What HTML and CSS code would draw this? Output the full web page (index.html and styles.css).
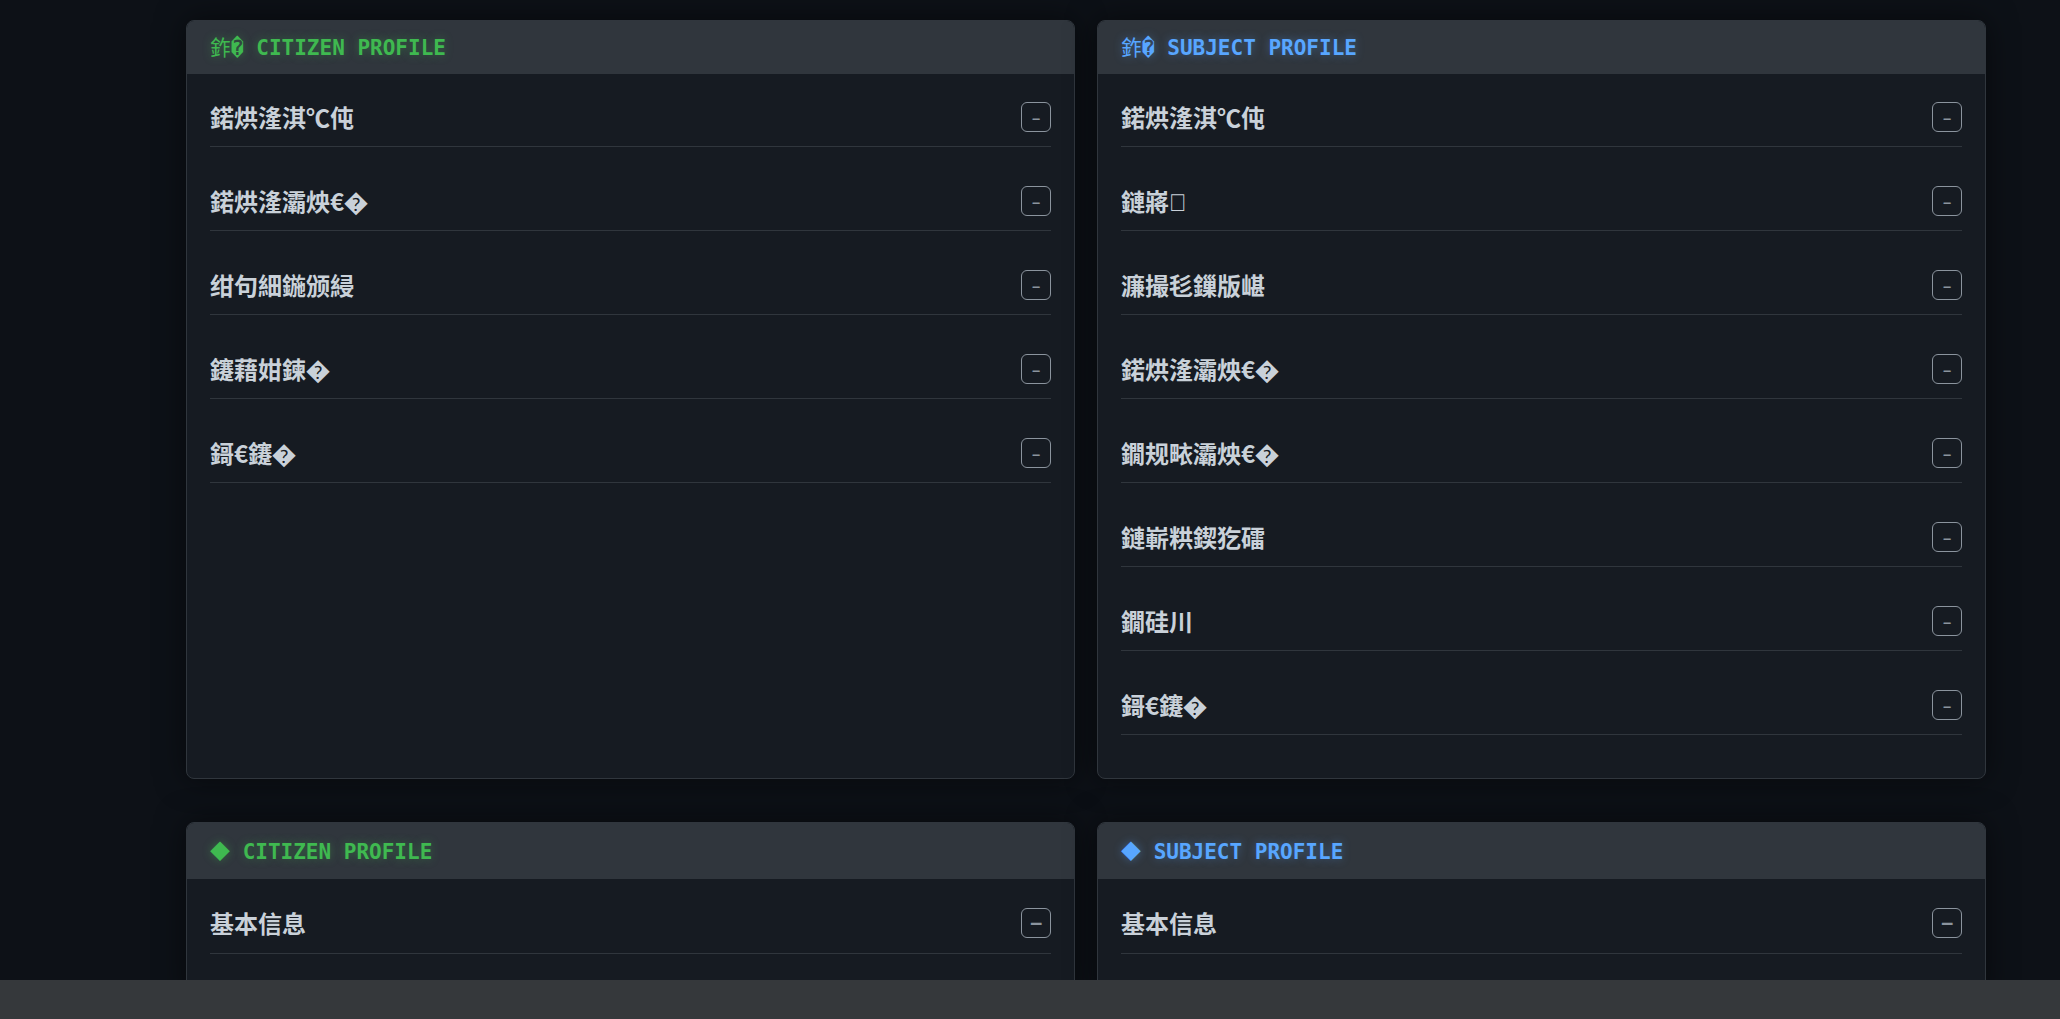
FILE: index.html
```html
<!DOCTYPE html>
<html lang="zh-CN">
<head>
<meta charset="UTF-8" />
<meta name="viewport" content="width=device-width, initial-scale=1.0" />
<title>Profile</title>
<link rel="stylesheet" href="styles.css">
</head>
<body>

<main class="content">
  <div class="profiles">
    <section class="card citizen">
      <h2 class="card-header"><span class="mark">鈼</span>&#xFFFD; CITIZEN PROFILE</h2>
      <div class="card-body">
        <div class="section-title"><h3>鍩烘湰淇℃伅</h3><button class="toggle" aria-label="鍩烘湰淇℃伅">–</button></div>
        <div class="section-title"><h3>鍩烘湰灞炴€&#xFFFD;</h3><button class="toggle" aria-label="鍩烘湰灞炴€">–</button></div>
        <div class="section-title"><h3>绀句細鍦颁綅</h3><button class="toggle" aria-label="绀句細鍦颁綅">–</button></div>
        <div class="section-title"><h3>鑳藉姏鍊&#xFFFD;</h3><button class="toggle" aria-label="鑳藉姏鍊">–</button></div>
        <div class="section-title"><h3>鎶€鑳&#xFFFD;</h3><button class="toggle" aria-label="鎶€鑳">–</button></div>
      </div>
    </section>

    <section class="card subject">
      <h2 class="card-header"><span class="mark">鈼</span>&#xFFFD; SUBJECT PROFILE</h2>
      <div class="card-body">
        <div class="section-title"><h3>鍩烘湰淇℃伅</h3><button class="toggle" aria-label="鍩烘湰淇℃伅">–</button></div>
        <div class="section-title"><h3>鏈嶈<span class="box">&#xE5CA;</span></h3><button class="toggle" aria-label="鏈嶈">–</button></div>
        <div class="section-title"><h3>濂撮毝鏁版嵁</h3><button class="toggle" aria-label="濂撮毝鏁版嵁">–</button></div>
        <div class="section-title"><h3>鍩烘湰灞炴€&#xFFFD;</h3><button class="toggle" aria-label="鍩烘湰灞炴€">–</button></div>
        <div class="section-title"><h3>鐗规畩灞炴€&#xFFFD;</h3><button class="toggle" aria-label="鐗规畩灞炴€">–</button></div>
        <div class="section-title"><h3>鏈嶄粠鍥犵礌</h3><button class="toggle" aria-label="鏈嶄粠鍥犵礌">–</button></div>
        <div class="section-title"><h3>鐗硅川</h3><button class="toggle" aria-label="鐗硅川">–</button></div>
        <div class="section-title"><h3>鎶€鑳&#xFFFD;</h3><button class="toggle" aria-label="鎶€鑳">–</button></div>
      </div>
    </section>
  </div>

  <div class="profiles profiles-main">
    <section class="card citizen">
      <h2 class="card-header"><span class="mark">◆</span> CITIZEN PROFILE</h2>
      <div class="card-body">
        <div class="section-title"><h3>基本信息</h3><button class="toggle" aria-label="基本信息">−</button></div>
      </div>
    </section>

    <section class="card subject">
      <h2 class="card-header"><span class="mark">◆</span> SUBJECT PROFILE</h2>
      <div class="card-body">
        <div class="section-title"><h3>基本信息</h3><button class="toggle" aria-label="基本信息">−</button></div>
      </div>
    </section>
  </div>
</main>

<footer class="bottom-bar"></footer>

</body>
</html>
```

FILE: styles.css
```css
* {
  box-sizing: border-box;
}

body {
  margin: 0;
  height: 100vh;
  display: flex;
  flex-direction: column;
  background: #0d1117;
  color: #c9d1d9;
  font-family: "Noto Sans CJK SC", sans-serif;
}

.content {
  flex: 1;
  min-height: 0;
  overflow: hidden;
  padding: 20px 74px 0 186px;
}

.profiles {
  display: grid;
  grid-template-columns: 1fr 1fr;
  gap: 22px;
  margin-bottom: 43px;
}

.card {
  border: 1px solid #30363d;
  border-radius: 8px;
  background: #161b22;
  box-shadow: 0 0 30px rgba(0, 0, 0, 0.5);
}

.card-header {
  margin: 0;
  padding: 2px 23px 0;
  background: #30363d;
  border-radius: 7px 7px 0 0;
  font-family: "DejaVu Sans Mono", monospace;
  font-size: 21px;
  font-weight: 700;
  line-height: 51px;
  white-space: pre;
}

.mark {
  font-family: "Noto Sans CJK SC", sans-serif;
  font-size: 21px;
  font-weight: 400;
  line-height: 1;
}

.citizen .card-header {
  color: #3fb950;
  text-shadow: 0 0 10px rgba(63, 185, 80, 0.4);
}

.subject .card-header {
  color: #58a6ff;
  text-shadow: 0 0 10px rgba(88, 166, 255, 0.4);
}

.card-body {
  padding: 24px 23px 43px;
}

.section-title {
  display: flex;
  align-items: center;
  justify-content: space-between;
  padding-bottom: 10px;
  border-bottom: 1px solid #30363d;
}

.section-title + .section-title {
  margin-top: 35px;
}

.section-title h3 {
  margin: 0;
  font-size: 24px;
  font-weight: 700;
  line-height: 38px;
}

.box {
  font-family: "Liberation Sans";
  line-height: 1;
}

.toggle {
  width: 30px;
  height: 30px;
  padding: 0;
  border: 1px solid #8b949e;
  border-radius: 6px;
  background: transparent;
  color: #8b949e;
  font-family: "Noto Sans CJK SC", sans-serif;
  font-size: 16px;
  font-weight: 700;
  cursor: pointer;
}

/* second pair of cards */
.profiles-main .card-header {
  line-height: 54px;
}

.profiles-main .mark {
  font-size: 20px;
}

.profiles-main .card-body {
  padding-top: 25px;
}

.profiles-main .section-title {
  padding-bottom: 11px;
}

.profiles-main .toggle {
  font-family: "DejaVu Sans Mono", monospace;
  font-size: 20px;
}

.bottom-bar {
  height: 39px;
  background: #35383b;
}
```
